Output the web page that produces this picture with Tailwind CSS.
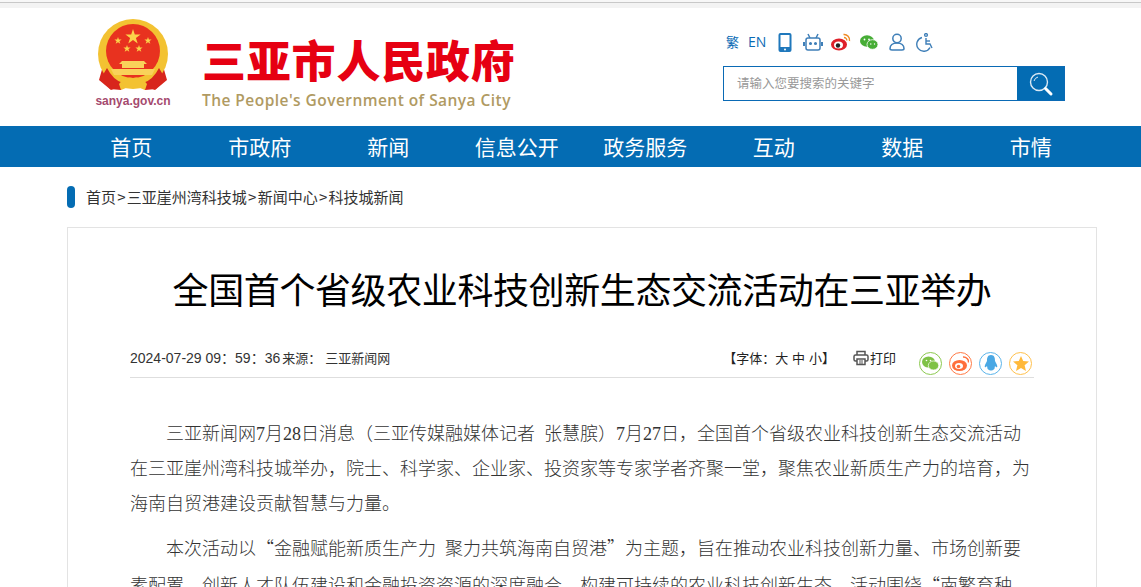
<!DOCTYPE html>
<html lang="zh-CN">
<head>
  <meta charset="UTF-8" />
  <title>三亚市人民政府</title>
  <script src="https://cdn.jsdelivr.net/npm/@tailwindcss/browser@4"></script>
</head>
<body class="bg-white font-['Noto_Sans_CJK_SC',sans-serif] text-[#333]">
<div class="h-[587px] overflow-hidden">

  <!-- top strip -->
  <div class="h-[2px] bg-[#f7f7f7]"></div>
  <div class="h-px bg-[#c8c8c8]"></div>
  <div class="h-[5px] bg-[#f3f3f3]"></div>

  <!-- header -->
  <header class="ml-[67px] mr-[44px] h-[118px] flex justify-between pl-[28px] pr-[32px]">
    <div class="flex">
      <div class="w-[76px] flex flex-col items-center pt-[10px]">
        <svg width="72" height="74" viewBox="0 0 72 74">
          <path d="M6 48 L2 62 L14 72 L30 66 L42 66 L58 72 L70 62 L66 48 Z" fill="#d8251c"/>
          <circle cx="36" cy="36" r="35" fill="#f3c232"/>
          <circle cx="36" cy="33" r="27" fill="#e8321f"/>
          <path d="M36 11 l1.800 5.500 h5.800 l-4.700 3.400 1.800 5.500 -4.700 -3.400 -4.700 3.400 1.800 -5.500 -4.700 -3.400 h5.800 Z" fill="#fbd34a"/>
          <path d="M21 19 l.9 2.600 h2.700 l-2.200 1.600 .9 2.600 -2.300 -1.600 -2.300 1.600 .9 -2.600 -2.200 -1.600 h2.700 Z" fill="#fbd34a"/>
          <path d="M51 19 l.9 2.600 h2.700 l-2.200 1.600 .9 2.600 -2.300 -1.600 -2.300 1.600 .9 -2.600 -2.200 -1.600 h2.700 Z" fill="#fbd34a"/>
          <path d="M30 27 l.9 2.600 h2.700 l-2.200 1.600 .9 2.600 -2.300 -1.600 -2.300 1.600 .9 -2.600 -2.200 -1.600 h2.700 Z" fill="#fbd34a"/>
          <path d="M42 27 l.9 2.600 h2.700 l-2.200 1.600 .9 2.600 -2.300 -1.600 -2.300 1.600 .9 -2.600 -2.200 -1.600 h2.700 Z" fill="#fbd34a"/>
          <path d="M25 43 h22 l3 3 h-3 v4 h-22 v-4 h-3 Z M14 51 h44 l-3 6 h-38 Z" fill="#f9d25a"/>
          <path d="M10 50 Q16 62 26 65 L24 72 L13 71 L4 60 Z M62 50 Q56 62 46 65 L48 72 L59 71 L68 60 Z" fill="#d8251c"/>
          <path d="M22 66 Q28 58 36 60 Q44 58 50 66 L48 72 L38 68 H34 L24 72 Z" fill="#f3c232"/>
        </svg>
        <span class="mt-[2px] text-[12px] leading-[14px] font-bold font-['Liberation_Sans',sans-serif] text-[#a54a6e]">sanya.gov.cn</span>
      </div>
      <div class="ml-[31px] pt-[26px]">
        <div class="text-[44px] leading-[50px] font-black text-[#e60012] tracking-[0.8px] whitespace-nowrap">三亚市人民政府</div>
        <div class="mt-[6px] text-[15.500px] leading-[20px] font-semibold font-['Open_Sans',sans-serif] text-[#b09a62] tracking-[0.450px] whitespace-nowrap">The People's Government of Sanya City</div>
      </div>
    </div>

    <div class="w-[342px] pt-[24px]">
      <div class="h-[20px] flex items-center text-[#0a6ab5] pl-[3px]">
        <span class="text-[13px] leading-[20px]">繁</span>
        <span class="ml-[9px] text-[14px] leading-[20px] font-['Open_Sans',sans-serif]">EN</span>
        <!-- phone -->
        <svg class="ml-[12px]" width="14" height="19" viewBox="0 0 14 19"><rect x="0.500" y="0" width="13" height="19" rx="2" fill="#1f78bc"/><rect x="2.500" y="2" width="9" height="12" fill="#fff"/><circle cx="7" cy="16.500" r="1" fill="#fff"/></svg>
        <!-- robot -->
        <svg class="ml-[11px]" width="20" height="18" viewBox="0 0 20 18" fill="none" stroke="#3f7fb8" stroke-width="1.500"><rect x="3" y="5" width="14" height="12" rx="2"/><path d="M7 5 L5 1 M13 5 L15 1"/><path d="M1 9 v4 M19 9 v4" stroke-width="2"/><circle cx="7.500" cy="10.500" r=".8" fill="#3f7fb8"/><circle cx="12.500" cy="10.500" r=".8" fill="#3f7fb8"/></svg>
        <!-- weibo -->
        <svg class="ml-[8px]" width="20" height="18" viewBox="0 0 20 18"><ellipse cx="8" cy="11.500" rx="8" ry="6" fill="#df2029"/><ellipse cx="7.500" cy="12" rx="4.500" ry="3.500" fill="#fff"/><circle cx="7" cy="12.500" r="2.200" fill="#222"/><path d="M12.500 1.500 A5.500 5.500 0 0 1 18.500 8 M13 4.500 A2.800 2.800 0 0 1 15.800 7.500" fill="none" stroke="#f08a24" stroke-width="1.400"/></svg>
        <!-- wechat -->
        <svg class="ml-[9px]" width="18" height="15" viewBox="0 0 18 15"><ellipse cx="7" cy="6" rx="7" ry="5.800" fill="#47ad36"/><ellipse cx="12.500" cy="9.500" rx="5.500" ry="4.800" fill="#47ad36" stroke="#fff" stroke-width=".8"/><circle cx="4.500" cy="4.500" r=".9" fill="#fff"/><circle cx="9" cy="4.500" r=".9" fill="#fff"/><circle cx="10.800" cy="9" r=".7" fill="#fff"/><circle cx="14.500" cy="9" r=".7" fill="#fff"/></svg>
        <!-- user -->
        <svg class="ml-[11px]" width="16" height="18" viewBox="0 0 16 18" fill="none" stroke="#3f7fb8" stroke-width="1.500"><circle cx="8" cy="5.500" r="4.200"/><path d="M8 10 C3.500 10 1 12.500 1 15.500 Q1 17 3 17 H13 Q15 17 15 15.500 C15 12.500 12.500 10 8 10 Z"/></svg>
        <!-- wheelchair -->
        <svg class="ml-[9px]" width="20" height="19" viewBox="0 0 20 19" fill="none" stroke="#3f7fb8" stroke-width="1.400"><circle cx="12" cy="2" r="1.400"/><path d="M12 5 V11 H16 L18 15"/><path d="M12 8 H16"/><path d="M8 4.500 A7 7 0 1 0 16 14.500"/></svg>
      </div>
      <div class="mt-[14px] h-[35px] flex border border-[#0a6ab5]">
        <input class="flex-1 min-w-0 pl-[13px] text-[12.500px] outline-none placeholder:text-[#999]" placeholder="请输入您要搜索的关键字" />
        <div class="w-[47px] bg-[#046cb3] flex items-center justify-center">
          <svg width="26" height="26" viewBox="0 0 26 26" fill="none"><circle cx="11" cy="11" r="8.500" stroke="#dbe9f4" stroke-width="1.400"/><path d="M6 10 A5.500 5.500 0 0 1 10 6" stroke="#dbe9f4"/><path d="M17.500 17.500 L23 23" stroke="#fff" stroke-width="3" stroke-linecap="round"/></svg>
        </div>
      </div>
    </div>
  </header>

  <!-- nav -->
  <nav class="h-[41px] bg-[#046cb3]">
    <ul class="ml-[67px] mr-[46px] grid grid-cols-8 text-center text-white text-[21px] leading-[41px]">
      <li>首页</li>
      <li>市政府</li>
      <li>新闻</li>
      <li>信息公开</li>
      <li>政务服务</li>
      <li>互动</li>
      <li>数据</li>
      <li>市情</li>
    </ul>
  </nav>

  <main class="ml-[67px] mr-[44px]">
    <!-- breadcrumb -->
    <div class="h-[60px] flex items-center">
      <span class="w-[8px] h-[22px] rounded-[4px] bg-[#046cb3]"></span>
      <span class="ml-[11px] text-[15px] leading-[22px] text-[#333]">首页<span class="mx-[1.250px]">&gt;</span>三亚崖州湾科技城<span class="mx-[1.250px]">&gt;</span>新闻中心<span class="mx-[1.250px]">&gt;</span>科技城新闻</span>
    </div>

    <article class="border border-[#e3e3e3] px-[62px] h-[400px]">
      <h1 class="mt-[36px] text-center text-[36px] leading-[48px] text-black tracking-[-0.400px]">全国首个省级农业科技创新生态交流活动在三亚举办</h1>

      <div class="mt-[25px] h-[41px] border-b border-[#dedede] flex justify-between">
        <div class="text-[14px] leading-[24px] pt-[9px] font-['Liberation_Sans','Noto_Sans_CJK_SC',sans-serif] whitespace-nowrap">2024-07-29 09：59：36<span class="ml-[2px] text-[13px]">来源：</span><span class="ml-[4px] text-[13px]">三亚新闻网</span></div>
        <div class="flex items-start">
          <span class="text-[13px] leading-[24px] pt-[9px] text-[#222] [word-spacing:1px]">【字体：大 中 小】</span>
          <span class="ml-[18px] flex items-center text-[13px] leading-[24px] text-[#222] pt-[9px]">
            <svg width="16" height="16" viewBox="0 0 16 16" fill="none" stroke="#555" stroke-width="1.500"><path d="M4 5 V1.500 H12 V5"/><rect x="1" y="5" width="14" height="6" rx="1.500"/><rect x="4" y="9" width="8" height="5.500" fill="#fff"/><path d="M6 11 H10 M6 13 H10" stroke-width="1"/></svg>
            <span class="ml-[1px]">打印</span>
          </span>
          <div class="ml-[23px] mt-[15px] flex gap-[7px] pr-[2px]">
            <span class="w-[23px] h-[23px] rounded-full border border-[#8cc94f] flex items-center justify-center">
              <svg width="17" height="15" viewBox="0 0 17 15"><ellipse cx="6.500" cy="6" rx="6.500" ry="5.500" fill="#7fc246"/><ellipse cx="11.500" cy="9.500" rx="5.200" ry="4.500" fill="#7fc246" stroke="#fff" stroke-width=".7"/><circle cx="4.500" cy="4.500" r=".8" fill="#fff"/><circle cx="8.500" cy="4.500" r=".8" fill="#fff"/></svg>
            </span>
            <span class="w-[23px] h-[23px] rounded-full border border-[#ff7a45] flex items-center justify-center">
              <svg width="17" height="15" viewBox="0 0 17 15"><ellipse cx="7.500" cy="9.500" rx="7.500" ry="5.500" fill="#ff6f3c"/><ellipse cx="7" cy="10" rx="4" ry="3" fill="#fff"/><circle cx="6.500" cy="10.500" r="1.800" fill="#ff6f3c"/><path d="M11 1 A5 5 0 0 1 16.500 6.500" fill="none" stroke="#ff6f3c" stroke-width="1.500"/></svg>
            </span>
            <span class="w-[23px] h-[23px] rounded-full border border-[#5ab4ea] flex items-center justify-center">
              <svg width="14" height="17" viewBox="0 0 14 17"><path d="M7 0 C3.500 0 3 3 3 6 L1 10 Q0 13 2 12 L3 11 Q3 14 5 15 Q7 16 9 15 Q11 14 11 11 L12 12 Q14 13 13 10 L11 6 C11 3 10.500 0 7 0 Z" fill="#4aa8e4"/></svg>
            </span>
            <span class="w-[23px] h-[23px] rounded-full border border-[#ffc14d] flex items-center justify-center">
              <svg width="16" height="15" viewBox="0 0 16 15"><path d="M8 0 L10.200 5 L16 5.600 L11.600 9.200 L13 15 L8 12 L3 15 L4.400 9.200 L0 5.600 L5.800 5 Z" fill="#ffb93b"/></svg>
            </span>
          </div>
        </div>
      </div>

      <div class="mt-[39px] text-[18px] leading-[35px] text-[#333] font-light font-['Liberation_Serif','Noto_Sans_CJK_SC',serif]">
        <p class="indent-[36px] mb-[8px]">三亚新闻网7月28日消息（三亚传媒融媒体记者&nbsp;&nbsp;张慧膑）7月27日，全国首个省级农业科技创新生态交流活动在三亚崖州湾科技城举办，院士、科学家、企业家、投资家等专家学者齐聚一堂，聚焦农业新质生产力的培育，为海南自贸港建设贡献智慧与力量。</p>
        <p class="indent-[36px]">本次活动以<span class="font-['Noto_Sans_CJK_SC']">“</span>金融赋能新质生产力&nbsp;&nbsp;聚力共筑海南自贸港<span class="font-['Noto_Sans_CJK_SC']">”</span>为主题，旨在推动农业科技创新力量、市场创新要素配置、创新人才队伍建设和金融投资资源的深度融合，构建可持续的农业科技创新生态。活动围绕<span class="font-['Noto_Sans_CJK_SC']">“</span>南繁育种、</p>
      </div>
    </article>
  </main>
</div>
</body>
</html>
